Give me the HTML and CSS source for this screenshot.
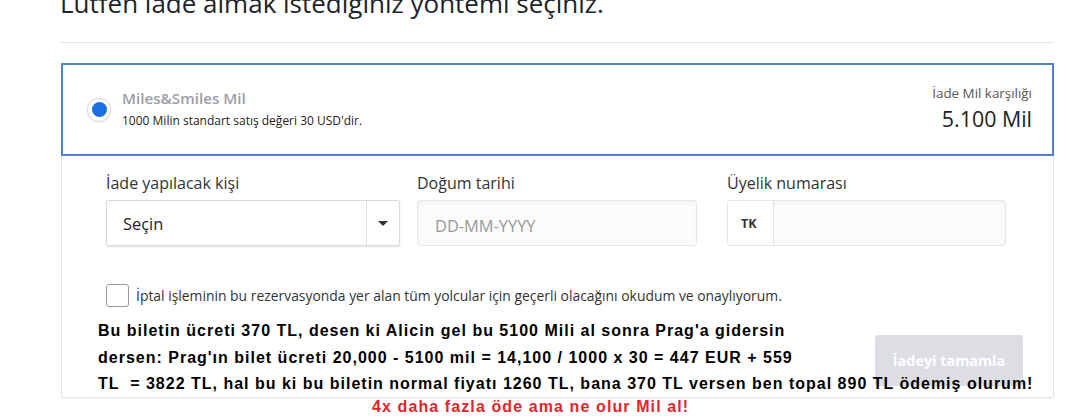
FILE: index.html
```html
<!DOCTYPE html>
<html lang="tr">
<head>
<meta charset="utf-8">
<link rel="stylesheet" href="styles.css">
</head>
<body>
<div class="page">
  <h1 class="title">Lütfen iade almak istediğiniz yöntemi seçiniz.</h1>
  <div class="card">
    <div class="option">
      <span class="radio"><span class="radio-dot"></span></span>
      <div class="option-text">
        <div class="option-name">Miles&amp;Smiles Mil</div>
        <div class="option-desc">1000 Milin standart satış değeri 30 USD'dir.</div>
      </div>
      <div class="option-value">
        <div class="value-label">İade Mil karşılığı</div>
        <div class="value-amount">5.100 Mil</div>
      </div>
    </div>
    <div class="form">
      <div class="fields">
        <div class="field">
          <label class="label">İade yapılacak kişi</label>
          <div class="select">
            <span class="select-text">Seçin</span>
            <span class="select-arrow"><span class="caret"></span></span>
          </div>
        </div>
        <div class="field">
          <label class="label">Doğum tarihi</label>
          <div class="input date">DD-MM-YYYY</div>
        </div>
        <div class="field">
          <label class="label">Üyelik numarası</label>
          <div class="input member">
            <span class="prefix">TK</span>
            <span class="member-rest"></span>
          </div>
        </div>
      </div>
      <div class="check-row">
        <span class="checkbox"></span>
        <span class="check-text">İptal işleminin bu rezervasyonda yer alan tüm yolcular için geçerli olacağını okudum ve onaylıyorum.</span>
      </div>
      <div class="actions">
        <button class="btn" disabled>İadeyi tamamla</button>
      </div>
    </div>
  </div>
  <div class="note">Bu biletin ücreti 370 TL, desen ki Alicin gel bu 5100 Mili al sonra Prag'a gidersin<br>dersen: Prag'ın bilet ücreti 20,000 - 5100 mil = 14,100 / 1000 x 30 = 447 EUR + 559<br>TL &nbsp;= 3822 TL, hal bu ki bu biletin normal fiyatı 1260 TL, bana 370 TL versen ben topal 890 TL ödemiş olurum!</div>
  <div class="note-red">4x daha fazla öde ama ne olur Mil al!</div>
</div>
</body>
</html>
```
FILE: styles.css
```css
* { box-sizing: border-box; }
html, body { margin: 0; padding: 0; background: #fff; overflow: hidden; }
body { font-family: "Open Sans", Lato, sans-serif; color: #222; width: 1070px; height: 420px; position: relative; }

.page { padding: 0 16px 0 61px; height: 420px; display: flow-root; }

.title {
  margin: -12px 0 0 -1px;
  font-size: 26px;
  line-height: 30px;
  font-weight: 500;
  color: #1e2328;
  padding-bottom: 24px;
  border-bottom: 1px solid #e6e6e6;
  width: 994px;
  white-space: nowrap;
}

.card {
  margin-top: 20px;
  width: 993px;
  border: 1px solid #e4e4e4;
  border-top: none;
  border-radius: 2px;
  box-shadow: 0 1px 2px rgba(0,0,0,0.04);
}

.option {
  display: flex;
  align-items: center;
  height: 93px;
  border: 2px solid #4f82d0;
  margin: 0 -1px;
  padding: 0 20px 0 24px;
}
.radio {
  width: 24px; height: 24px;
  border-radius: 50%;
  border: 1px solid #dcdcdc;
  box-shadow: 0 0 2px rgba(0,0,0,0.12);
  display: flex; align-items: center; justify-content: center;
  flex: none;
  background: #fff;
}
.radio-dot { width: 15px; height: 15px; border-radius: 50%; background: #1c6fe3; }
.option-text { margin-left: 11px; flex: 1; padding-bottom: 2px; }
.option-name { font-size: 15.2px; font-weight: 600; color: #9b9da6; line-height: 18px; }
.option-desc { font-size: 12px; color: #222; margin-top: 6px; line-height: 15px; }
.option-value { text-align: right; padding-bottom: 4px; }
.value-label { font-size: 13.4px; color: #555; line-height: 16px; }
.value-amount { font-size: 21.4px; color: #222; line-height: 24px; margin-top: 6px; }

.form { padding: 17px 30px 11px 44px; }
.fields { display: grid; grid-template-columns: 311px 310px 1fr; }
.field { display: flex; flex-direction: column; }
.label { font-size: 16px; line-height: 20px; color: #333; margin-bottom: 7px; }

.select {
  width: 294px; height: 46px;
  border: 1px solid #dadada;
  border-radius: 2px;
  box-shadow: 0 1px 2px rgba(0,0,0,0.12);
  display: flex; align-items: stretch;
  background: #fff;
}
.select-text { flex: 1; padding-left: 16px; font-size: 16.4px; color: #222; display: flex; align-items: center; }
.select-arrow { width: 33px; border-left: 1px solid #e2e2e2; display: flex; align-items: center; justify-content: center; }
.caret { width: 0; height: 0; border-left: 5px solid transparent; border-right: 5px solid transparent; border-top: 5px solid #333; }

.input {
  height: 46px;
  border: 1px solid #e6e6e6;
  border-radius: 3px;
  background: #fbfbfb;
  box-shadow: inset 0 2px 4px rgba(0,0,0,0.04);
}
.date { width: 280px; padding-left: 17px; font-size: 16.4px; color: #999; display: flex; align-items: center; padding-top: 4px; }
.member { width: 279px; display: flex; align-items: stretch; overflow: hidden; }
.prefix { width: 46px; background: #fff; border-right: 1px solid #e2e2e2; font-size: 12.5px; font-weight: 700; color: #333; display: flex; align-items: center; padding-left: 13px; }
.member-rest { flex: 1; }

.check-row { display: flex; align-items: center; margin-top: 38px; height: 23px; }
.checkbox { width: 23px; height: 23px; border: 1px solid #9a9a9a; border-radius: 3px; background: #fff; flex: none; }
.check-text { margin-left: 7px; font-size: 13.9px; color: #333; }

.actions { display: flex; justify-content: flex-end; margin-top: 28px; }
.btn {
  width: 148px; height: 51px;
  border: none; border-radius: 3px;
  background: #dcdee4;
  color: #fff;
  font-family: "Open Sans", sans-serif;
  font-size: 14.4px; font-weight: 700;
}

.note {
  position: absolute;
  left: 98px; top: 318px;
  font-family: "Liberation Sans", Arial, sans-serif;
  font-weight: 700;
  font-size: 16px;
  letter-spacing: 1px;
  line-height: 26.5px;
  color: #000;
  white-space: nowrap;
}
.note-red {
  position: absolute;
  left: 372px; top: 396px;
  font-family: "Liberation Sans", Arial, sans-serif;
  font-weight: 700;
  font-size: 16px;
  letter-spacing: 1.1px;
  line-height: 22px;
  color: #e2262b;
  white-space: nowrap;
}
```
